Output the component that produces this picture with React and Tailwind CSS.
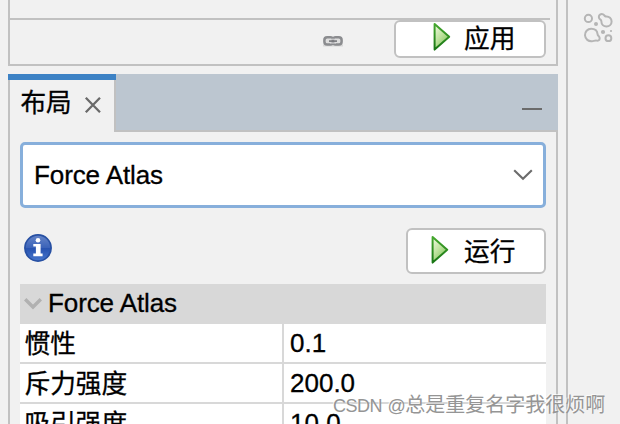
import React from "react";

const UI_FONT = "font-['Liberation_Sans','Noto_Sans_CJK_SC',sans-serif]";

function PlayIcon({ id }) {
  return (
    <svg width="20" height="30" viewBox="0 0 20 30" className="shrink-0">
      <defs>
        <linearGradient id={id} x1="0" y1="0" x2="0.7" y2="1">
          <stop offset="0" stopColor="#f2fae4" />
          <stop offset="0.5" stopColor="#c0e3a0" />
          <stop offset="1" stopColor="#7cc455" />
        </linearGradient>
        <linearGradient id={id + "-edge"} x1="0" y1="0" x2="0" y2="1">
          <stop offset="0" stopColor="#45a82e" />
          <stop offset="1" stopColor="#187514" />
        </linearGradient>
      </defs>
      <path d="M2.6 2 L17.2 14.8 L2.6 27.6 Z" fill={`url(#${id})`} stroke={`url(#${id}-edge)`} strokeWidth="2" strokeLinejoin="round" />
    </svg>
  );
}

function LinkIcon() {
  return (
    <svg width="22" height="14" viewBox="0 0 22 14" className="shrink-0">
      <path d="M1 11.4h20" stroke="#d8d8d8" strokeWidth="2.2" />
      <rect x="2.4" y="3.2" width="8.6" height="7.4" rx="2.8" fill="#dedede" stroke="#8b8c8f" strokeWidth="2.5" />
      <rect x="11" y="3.2" width="8.6" height="7.4" rx="2.8" fill="#dedede" stroke="#8b8c8f" strokeWidth="2.5" />
      <path d="M8 5.2h6M8 9h6" stroke="#d9d9db" strokeWidth="1" />
      <path d="M7 7.1h8" stroke="#77787c" strokeWidth="1.6" />
    </svg>
  );
}

function InfoIcon() {
  return (
    <svg width="28" height="28" viewBox="0 0 28 28" className="shrink-0">
      <defs>
        <linearGradient id="info-fill" x1="0" y1="0" x2="0" y2="1">
          <stop offset="0" stopColor="#6685c8" />
          <stop offset="0.5" stopColor="#3a62b8" />
          <stop offset="0.52" stopColor="#2853b0" />
          <stop offset="1" stopColor="#4676cd" />
        </linearGradient>
      </defs>
      <circle cx="14" cy="14" r="13.1" fill="url(#info-fill)" stroke="#2750a3" strokeWidth="1.7" />
      <circle cx="14" cy="6.2" r="2.3" fill="#fff" />
      <path d="M9.3 10h7.3v9.6h2v2.6H9.3v-2.6h2.6v-7H9.3z" fill="#fff" />
    </svg>
  );
}

function BubblesIcon() {
  return (
    <svg width="30" height="30" viewBox="0 0 30 30" fill="none" stroke="#b5b5b5" strokeWidth="2">
      <circle cx="5.4" cy="5.4" r="3.6" />
      <path d="M15.9 4.3c-.3-2.3 2-3.9 4.2-2.9 1.2.6 1.6 1.9 2.9 2.2 3.2-.3 5.6 2 5.6 4.9 0 2.9-2.3 5.1-5.1 5.1-3 0-5.1-2.3-5.1-5 0-1.3-.3-1.6-1.2-2.2-.7-.5-1.2-1.1-1.3-2.1z" />
      <path d="M8.2 15.8c-3.8 0-6.4 3-6.2 6.5.2 4 3.5 6.2 7 5.9 1.4-.1 2.6-.7 4-.7.8 0 1.5.5 2.4 0 1.5-.8 1.7-3 .4-4.2-.9-.8-1.2-1.2-1.3-2.4-.3-3.3-3-5.1-6.3-5.1z" />
      <circle cx="25.4" cy="25.2" r="2.9" />
      <g fill="#b5b5b5" stroke="none">
        <circle cx="13" cy="11" r="2" />
        <circle cx="20" cy="19" r="2.1" />
        <circle cx="28" cy="18" r="1.1" />
      </g>
    </svg>
  );
}

function ParameterRow({ name, value }) {
  return (
    <div className="flex h-10 shrink-0 border-b-2 border-[#d8d8d8] bg-white">
      <div className="w-[264px] shrink-0 border-r-2 border-[#d8d8d8] pl-[4.5px] pt-px text-[25.7px]">{name}</div>
      <div className="pl-1.5">{value}</div>
    </div>
  );
}

function TopPanel() {
  return (
    <section className="h-[66px] shrink-0 border-x-2 border-b-2 border-[#c1c1c1]">
      <div className="mr-1.5 h-5 border-b-2 border-[#c1c1c1]" />
      <div className="flex items-start justify-end pr-2.5">
        <div className="mr-[50px] pt-[14px]"><LinkIcon /></div>
        <button className="flex h-[38px] w-[152px] items-center rounded-md border-2 border-[#c1c1c1] bg-white pl-9">
          <div className="-mt-1"><PlayIcon id="apply-play" /></div>
          <span className="ml-3 text-[25.7px] leading-[34px]">应用</span>
        </button>
      </div>
    </section>
  );
}

function LayoutPanel() {
  return (
    <section className="mt-2 flex h-[350px] shrink-0 flex-col">
      <header className="flex h-[58px] shrink-0">
        <div className="flex w-[108px] shrink-0 border-t-[6px] border-[#3d82c5]">
          <div className="flex w-full border-x-2 border-[#c1c1c1] pl-[10.5px]">
            <span className="text-[25.6px] leading-[46px]">布局</span>
            <svg width="18" height="18" viewBox="0 0 18 18" className="ml-[12px] mt-4">
              <path d="M1.8 1.8l14.2 14.4M16 1.8L1.8 16.2" stroke="#6a6a6a" strokeWidth="2.3" />
            </svg>
          </div>
        </div>
        <div className="flex grow justify-end border-b-2 border-[#c1c1c1] bg-[#bcc6d0] pr-4 pt-[34px]">
          <div className="h-0.5 w-5 bg-[#6b6b6b]" />
        </div>
      </header>
      <div className="flex grow flex-col overflow-hidden border-x-2 border-[#c1c1c1] px-2.5 pt-2.5">
        <div className="flex h-[66px] shrink-0 items-center justify-between rounded-[5px] border-[3px] border-[#87afdb] bg-white pl-[11px] pr-2.5">
          <span className="tracking-[-0.1px]">Force Atlas</span>
          <svg width="20" height="12" viewBox="0 0 20 12" fill="none">
            <path d="M1.2 1.2L10 9.8l8.8-8.6" stroke="#6c6c6c" strokeWidth="2.1" />
          </svg>
        </div>
        <div className="mt-5 flex h-[46px] shrink-0 items-start justify-between pl-1">
          <div className="pt-1.5"><InfoIcon /></div>
          <button className="flex h-[46px] w-[140px] items-center rounded-md border-2 border-[#c1c1c1] bg-white pl-[22px]">
            <div className="-mt-0.5"><PlayIcon id="run-play" /></div>
            <span className="ml-3.5 pt-px text-[25.7px] leading-[42px]">运行</span>
          </button>
        </div>
        <div className="mt-2.5 flex flex-col leading-[38px]">
          <div className="flex h-10 shrink-0 items-center bg-[#d8d8d8] pl-1">
            <svg width="18" height="12" viewBox="0 0 18 12" fill="none">
              <path d="M1.2 1.3L9 9l7.8-7.7" stroke="#b1b1b1" strokeWidth="3.4" />
            </svg>
            <span className="ml-1.5 pb-0.5 tracking-[-0.1px]">Force Atlas</span>
          </div>
          <ParameterRow name="惯性" value="0.1" />
          <ParameterRow name="斥力强度" value="200.0" />
          <ParameterRow name="吸引强度" value="10.0" />
        </div>
      </div>
    </section>
  );
}

export default function App() {
  return (
    <main className={`relative flex h-[424px] w-[620px] overflow-hidden bg-[#f1f1f1] pl-2 text-[26px] whitespace-nowrap text-black [-webkit-text-stroke:0.3px] ${UI_FONT}`}>
      <div className="flex w-[550px] shrink-0 flex-col">
        <TopPanel />
        <LayoutPanel />
      </div>
      <aside className="ml-2 grow border-l-2 border-[#c1c1c1] pl-[15px] pt-[13px]">
        <BubblesIcon />
      </aside>
      <div className="absolute left-[333px] top-[390px] text-[20px] leading-[30px] text-[#959595] [-webkit-text-stroke:0px] [text-shadow:-1px_-1px_0_#ffffffb0]">
        <span className="text-[18px] tracking-[-0.5px] [word-spacing:1px]">CSDN @</span>总是重复名字我很烦啊
      </div>
    </main>
  );
}
